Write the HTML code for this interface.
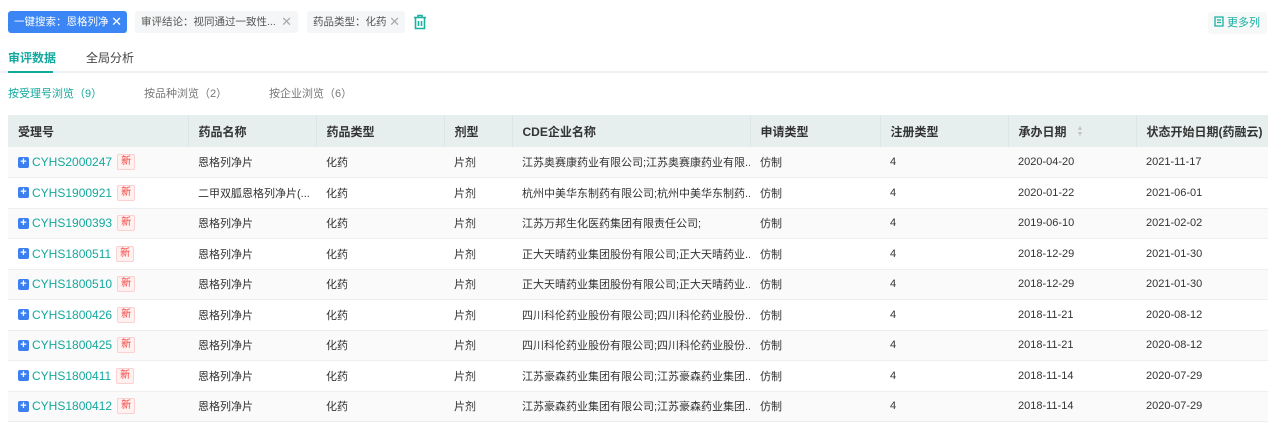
<!DOCTYPE html>
<html><head><meta charset="utf-8"><style>
*{margin:0;padding:0;box-sizing:border-box}
body{width:1268px;height:431px;overflow:hidden;background:#fff;font-family:"Liberation Sans","Noto Sans CJK SC",sans-serif;font-size:12px;color:#333;position:relative}
.abs{position:absolute}
.tag{position:absolute;top:11px;height:22px;border-radius:3px;line-height:22px;padding-left:6px;font-size:10.5px;white-space:nowrap;overflow:hidden}
.x{position:absolute;font-size:13px;top:0;right:5px}
table{position:absolute;left:8px;top:115px;width:1268px;border-collapse:collapse;table-layout:fixed}
th{height:32px;background:#e6eeee;text-align:left;font-weight:bold;padding-left:10px;color:#333;border-right:1px solid #dde6e6;font-size:12px;white-space:nowrap;overflow:hidden}
td{height:30.5px;padding-left:10px;border-bottom:1px solid #eceeef;white-space:nowrap;overflow:hidden;font-size:11px;color:#333;vertical-align:middle}
tr:nth-child(even) td{background:#fafafa}
.id{color:#13a89e;font-size:12px;vertical-align:middle}
.plus{display:inline-block;width:11px;height:11px;background:#3b7ff0;border-radius:2px;color:#fff;font-size:11px;line-height:11px;text-align:center;font-weight:bold;vertical-align:middle;margin-right:3px}
.new{display:inline-block;border:1px solid #fbd0d0;background:#fff1f0;color:#f5403d;font-size:10px;line-height:14px;padding:0 3px;margin-left:5px;border-radius:2px;vertical-align:middle}
.sort{display:inline-block;margin-left:10px;color:#c0c4c8;font-size:7px;line-height:6px;vertical-align:middle}
</style></head><body>
<div class="tag" style="left:8px;width:119px;background:#3b86f4;color:#fff">一键搜索：恩格列净<span class="x">✕</span></div>
<div class="tag" style="left:135px;width:163px;background:#f5f6f7;color:#555">审评结论：视同通过一致性...<span class="x" style="color:#aaa;right:6px">✕</span></div>
<div class="tag" style="left:307px;width:98px;background:#f5f6f7;color:#555">药品类型：化药<span class="x" style="color:#aaa">✕</span></div>
<svg class="abs" style="left:413px;top:14px" width="14" height="16" viewBox="0 0 14 16" fill="none" stroke="#19b0a2" stroke-width="1.6"><path d="M1 3.5h12M5 3.5V1.5h4v2M2.5 3.5v11h9v-11M5.5 7v5M8.5 7v5"/></svg>
<div class="abs" style="left:1208px;top:12px;width:59px;height:22px;background:#f7f8f8;border-radius:3px;color:#19b0a2;line-height:22px;padding-left:6px;font-size:11px"><svg width="10" height="11" viewBox="0 0 10 11" style="vertical-align:-1px;margin-right:3px" fill="none" stroke="#19b0a2" stroke-width="1.3"><path d="M1 1h8v9H1zM3 4h4M3 6.5h4"/></svg>更多列</div>
<div class="abs" style="left:8px;top:49px;font-size:12px;font-weight:bold;color:#13a89e">审评数据</div>
<div class="abs" style="left:86px;top:49px;font-size:12px;color:#444">全局分析</div>
<div class="abs" style="left:0;top:71px;width:1268px;height:2px;background:#eef0f2"></div>
<div class="abs" style="left:8px;top:71px;width:45px;height:2px;background:#13a89e"></div>
<div class="abs" style="left:8px;top:85px;color:#13a89e;font-size:11px">按受理号浏览（9）</div>
<div class="abs" style="left:144px;top:85px;color:#777;font-size:11px">按品种浏览（2）</div>
<div class="abs" style="left:269px;top:85px;color:#777;font-size:11px">按企业浏览（6）</div>
<table>
<colgroup><col style="width:180px"><col style="width:128px"><col style="width:128px"><col style="width:68px"><col style="width:238px"><col style="width:130px"><col style="width:128px"><col style="width:128px"><col style="width:140px"></colgroup>
<tr><th>受理号</th><th>药品名称</th><th>药品类型</th><th>剂型</th><th>CDE企业名称</th><th>申请类型</th><th>注册类型</th><th>承办日期<span class="sort">▲<br>▼</span></th><th>状态开始日期(药融云)<span class="sort">▲<br>▼</span></th></tr>
<tr><td><span class="plus">+</span><span class="id">CYHS2000247</span><span class="new">新</span></td><td>恩格列净片</td><td>化药</td><td>片剂</td><td>江苏奥赛康药业有限公司;江苏奥赛康药业有限...</td><td>仿制</td><td>4</td><td>2020-04-20</td><td>2021-11-17</td></tr>
<tr><td><span class="plus">+</span><span class="id">CYHS1900921</span><span class="new">新</span></td><td>二甲双胍恩格列净片(...</td><td>化药</td><td>片剂</td><td>杭州中美华东制药有限公司;杭州中美华东制药...</td><td>仿制</td><td>4</td><td>2020-01-22</td><td>2021-06-01</td></tr>
<tr><td><span class="plus">+</span><span class="id">CYHS1900393</span><span class="new">新</span></td><td>恩格列净片</td><td>化药</td><td>片剂</td><td>江苏万邦生化医药集团有限责任公司;</td><td>仿制</td><td>4</td><td>2019-06-10</td><td>2021-02-02</td></tr>
<tr><td><span class="plus">+</span><span class="id">CYHS1800511</span><span class="new">新</span></td><td>恩格列净片</td><td>化药</td><td>片剂</td><td>正大天晴药业集团股份有限公司;正大天晴药业...</td><td>仿制</td><td>4</td><td>2018-12-29</td><td>2021-01-30</td></tr>
<tr><td><span class="plus">+</span><span class="id">CYHS1800510</span><span class="new">新</span></td><td>恩格列净片</td><td>化药</td><td>片剂</td><td>正大天晴药业集团股份有限公司;正大天晴药业...</td><td>仿制</td><td>4</td><td>2018-12-29</td><td>2021-01-30</td></tr>
<tr><td><span class="plus">+</span><span class="id">CYHS1800426</span><span class="new">新</span></td><td>恩格列净片</td><td>化药</td><td>片剂</td><td>四川科伦药业股份有限公司;四川科伦药业股份...</td><td>仿制</td><td>4</td><td>2018-11-21</td><td>2020-08-12</td></tr>
<tr><td><span class="plus">+</span><span class="id">CYHS1800425</span><span class="new">新</span></td><td>恩格列净片</td><td>化药</td><td>片剂</td><td>四川科伦药业股份有限公司;四川科伦药业股份...</td><td>仿制</td><td>4</td><td>2018-11-21</td><td>2020-08-12</td></tr>
<tr><td><span class="plus">+</span><span class="id">CYHS1800411</span><span class="new">新</span></td><td>恩格列净片</td><td>化药</td><td>片剂</td><td>江苏豪森药业集团有限公司;江苏豪森药业集团...</td><td>仿制</td><td>4</td><td>2018-11-14</td><td>2020-07-29</td></tr>
<tr><td><span class="plus">+</span><span class="id">CYHS1800412</span><span class="new">新</span></td><td>恩格列净片</td><td>化药</td><td>片剂</td><td>江苏豪森药业集团有限公司;江苏豪森药业集团...</td><td>仿制</td><td>4</td><td>2018-11-14</td><td>2020-07-29</td></tr>
</table>
</body></html>
